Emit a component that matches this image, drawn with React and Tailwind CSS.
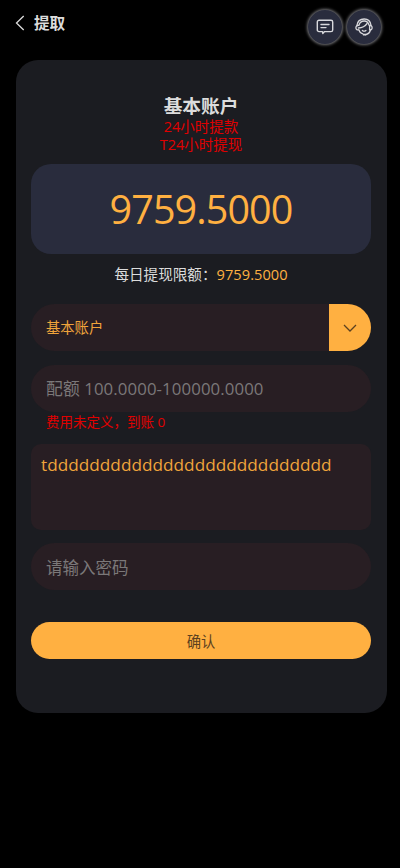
import { useState } from 'react';

const BackIcon = () => (
    <svg className="h-4 w-2.5" viewBox="0 0 10 16" fill="none" stroke="#dcdcdc" strokeWidth="1.3">
        <path d="M8.7 1 1.5 8l7.2 7" />
    </svg>
);

const MessageIcon = () => (
    <svg className="h-4 w-[18px]" viewBox="0 0 18 16" fill="none" stroke="#d8d8dc" strokeWidth="1.4" strokeLinecap="round" strokeLinejoin="round">
        <path d="M8.6 12.6 6.8 14.4 6.5 12.6H3A1.7 1.7 0 0 1 1.3 10.9V3A1.7 1.7 0 0 1 3 1.3h12A1.7 1.7 0 0 1 16.7 3v7.9a1.7 1.7 0 0 1-1.7 1.7H8.6Z" />
        <path d="M5 5.5h8M5 8.6h5" />
    </svg>
);

const ServiceIcon = () => (
    <svg className="h-[18px] w-[18px]" viewBox="0 0 18 18" fill="none" stroke="#d8d8dc" strokeWidth="1.3" strokeLinecap="round" strokeLinejoin="round">
        {/* headband */}
        <path d="M1.9 7.6C2.4 3.6 5.3 1 9.2 1c3.6 0 6.3 2.4 6.8 6.4" />
        <path d="M4 7.2C4.6 4.6 6.5 3 9.2 3c2.4 0 4.2 1.5 4.8 4.2" />
        {/* ear cups */}
        <path d="M3.6 7.4C1.9 7.3.9 8.2.9 9.7s1 2.4 2.7 2.2M14.6 7.4c1.6-.1 2.5.8 2.5 2.3s-.9 2.4-2.5 2.2V7.4Z" />
        {/* hair and face */}
        <path d="M3.5 9.9C6.6 9.8 9.9 8.5 12 5.6" strokeWidth="1.5" />
        <path d="M3.9 11.9c.6 2.1 2 3.5 3.9 4" />
        <path d="M7.4 12.5c1 .8 2.5.8 3.5 0" />
        {/* microphone */}
        <path d="M15.4 12c-.5 2.5-2.2 4.2-4.9 4.6" />
        <path d="M8.7 16.7h1.9" strokeWidth="1.8" />
    </svg>
);

const ChevronIcon = () => (
    <svg className="h-2 w-3.5" viewBox="0 0 14 8" fill="none" stroke="#5b4120" strokeWidth="1.3">
        <path d="m1 1 6 6 6-6" />
    </svg>
);

const RoundButton = ({ label, children }) => (
    <button
        type="button"
        aria-label={label}
        className="flex h-[34px] w-[34px] items-center justify-center rounded-full bg-[#292c3d] shadow-[0_0_3px_1px_#77777b]"
    >
        {children}
    </button>
);

const Header = () => (
    <header className="flex h-[60px] items-start justify-between pl-[15px] pr-[19px]">
        <div className="flex items-center gap-[9px] pt-[11px]">
            <BackIcon />
            <h1 className="text-[15.6px] leading-6 font-bold text-[#dcdcdc]">提取</h1>
        </div>
        <div className="flex gap-[5px] pt-2.5">
            <RoundButton label="消息">
                <MessageIcon />
            </RoundButton>
            <RoundButton label="客服">
                <ServiceIcon />
            </RoundButton>
        </div>
    </header>
);

const App = () => {
    const [amount, setAmount] = useState('');
    const [password, setPassword] = useState('');
    const [address, setAddress] = useState('tddddddddddddddddddddddddddd');

    return (
        <div className="min-h-[868px] bg-black font-['Open_Sans','Noto_Sans_CJK_SC',sans-serif]">
            <Header />

            <main className="ml-4 flex h-[653px] w-[371px] flex-col rounded-[22px] bg-[#1b1c21] pl-[15px] pr-4 pt-[34px]">
                {/* Account title */}
                <div className="text-center">
                    <h2 className="text-[18.7px] leading-[23px] font-bold text-[#dcdcdc]">基本账户</h2>
                    <p className="text-[14.5px] leading-[19px] text-[#e00000]">24小时提款</p>
                    <p className="text-[14.5px] leading-[18px] text-[#e00000]">T24小时提现</p>
                </div>

                {/* Balance */}
                <div className="mt-2.5 flex h-[90px] items-center justify-center rounded-[20px] bg-[#292c3d] pt-0.5 text-[39.5px] tracking-[-0.9px] text-[#ffb041]">
                    9759.5000
                </div>
                <p className="mt-2.5 text-center text-[14.6px] leading-[21px] text-[#dcdcdc]">
                    每日提现限额：<span className="tracking-[0.05px] text-[#ffb041]">9759.5000</span>
                </p>

                <form onSubmit={(e) => e.preventDefault()}>
                    {/* Account select */}
                    <div className="mt-[19px] flex h-[47px] items-center justify-between overflow-hidden rounded-full bg-[#281e23] pl-[15px]">
                        <span className="text-[14.3px] text-[#f0a43b]">基本账户</span>
                        <button type="button" aria-label="选择账户" className="flex h-full w-[42px] items-center justify-center bg-[#ffb041]">
                            <ChevronIcon />
                        </button>
                    </div>

                    {/* Amount */}
                    <input
                        type="text"
                        value={amount}
                        onChange={(e) => setAmount(e.target.value)}
                        placeholder="配额 100.0000-100000.0000"
                        className="mt-3.5 block h-[47px] w-full rounded-full bg-[#281e23] px-[15px] text-[16.8px] tracking-[0.1px] text-[#f0a43b] outline-none placeholder:text-[#7b7879]"
                    />
                    <p className="pl-[15px] text-[13.5px] leading-5 text-[#e00000]">费用未定义，到账 0</p>

                    {/* Address */}
                    <textarea
                        value={address}
                        onChange={(e) => setAddress(e.target.value)}
                        className="mt-3 block h-[86px] w-full resize-none rounded-[10px] bg-[#281e23] px-2.5 py-[9px] text-[17.2px] leading-6 font-medium tracking-[0.02px] text-[#f0a43b] outline-none"
                    />

                    {/* Password */}
                    <input
                        type="password"
                        value={password}
                        onChange={(e) => setPassword(e.target.value)}
                        placeholder="请输入密码"
                        className="mt-[13px] block h-[47px] w-full rounded-full bg-[#281e23] px-[15px] pt-0.5 text-[16.5px] text-[#f0a43b] outline-none placeholder:text-[#7b7879]"
                    />

                    <button type="submit" className="mt-8 block h-[37px] w-full rounded-full bg-[#ffb041] pt-0.5 text-[14.3px] text-[#5b4120]">
                        确认
                    </button>
                </form>
            </main>
        </div>
    );
};

export default App;
